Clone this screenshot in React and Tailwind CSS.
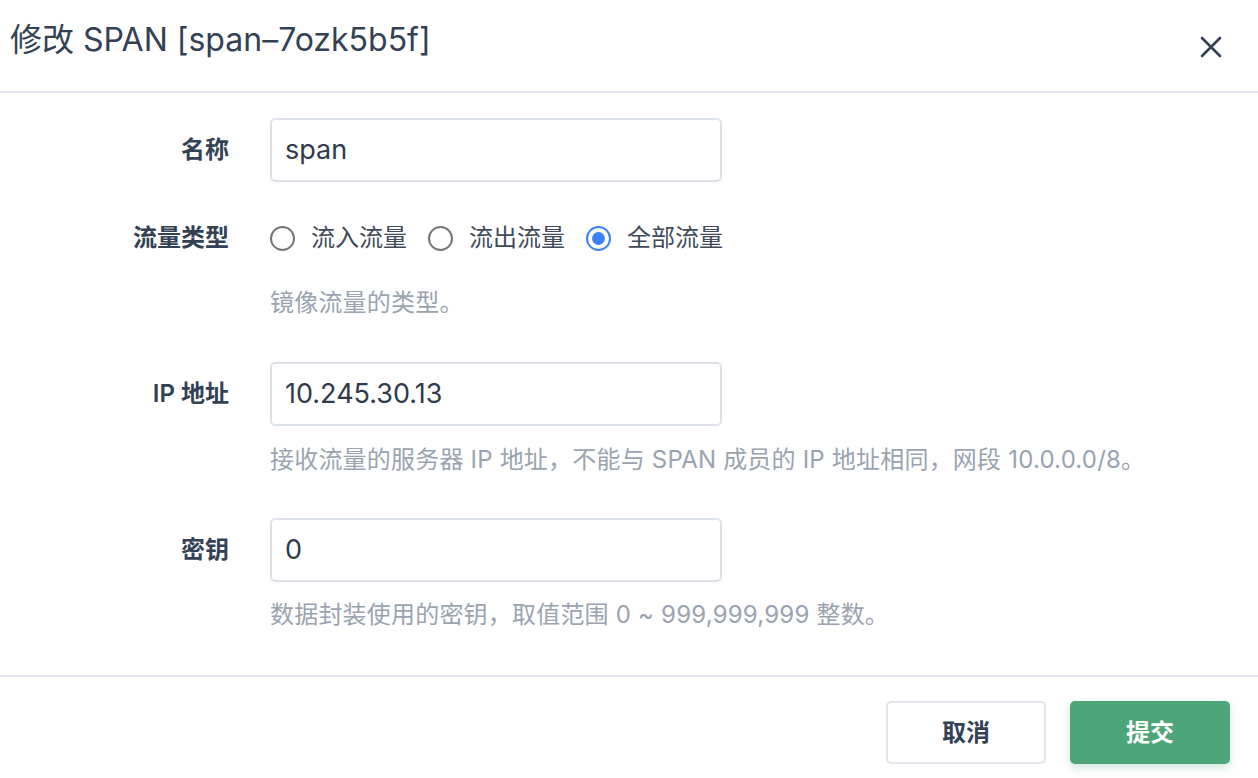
import React from "react";

const font = { fontFamily: '"Inter", "Noto Sans CJK SC", sans-serif' };

function Radio({ checked, label }) {
  return (
    <label className="flex items-center">
      <span
        className={
          checked
            ? "flex h-[25px] w-[25px] items-center justify-center rounded-full border-2 border-[#3b82f6]"
            : "h-[25px] w-[25px] rounded-full border-2 border-[#757575]"
        }
      >
        {checked && <span className="h-[13px] w-[13px] rounded-full bg-[#3b82f6]" />}
      </span>
      <span className="ml-[16px] text-[24px] text-[#3f4a5a]">{label}</span>
    </label>
  );
}

function Row({ label, children, help, helpClass }) {
  return (
    <div className="flex">
      <div className="w-[229px] shrink-0 text-right text-[24px] font-semibold text-[#334155] leading-[64px]">
        {label}
      </div>
      <div className="ml-[41px] flex flex-col">
        {children}
        {help && (
          <div className={"text-[24px] leading-[36px] tracking-[0.2px] text-[#9aa3af] " + (helpClass || "")}>{help}</div>
        )}
      </div>
    </div>
  );
}

function Input({ value }) {
  return (
    <div className="flex h-[64px] w-[452px] items-center rounded-[5px] border-2 border-[#dde1ea] px-[13px] text-[27px] text-[#2f3b4c]">
      {value}
    </div>
  );
}

export default function App() {
  return (
    <div className="h-[778px] w-[1258px] overflow-hidden bg-white" style={font}>
      <div className="flex h-[93px] items-center justify-between border-b-2 border-[#e5e8ee] pl-[10px] pr-[36px]">
        <div className="-mt-[12px] text-[32px] text-[#334155]">修改 SPAN [span–7ozk5b5f]</div>
        <svg width="22" height="22" viewBox="0 0 22 22" className="mt-[2px]">
          <path d="M2 2 L20 20 M20 2 L2 20" stroke="#334155" strokeWidth="2.6" strokeLinecap="round" />
        </svg>
      </div>
      <div className="flex h-[582px] flex-col pt-[25px]">
        <Row label="名称">
          <Input value="span" />
        </Row>
        <div className="mt-[24px]">
          <Row label="流量类型" help="镜像流量的类型。" helpClass="mt-[15px]">
            <div className="flex h-[64px] items-center gap-[21px]">
              <Radio label="流入流量" />
              <Radio label="流出流量" />
              <Radio checked label="全部流量" />
            </div>
          </Row>
        </div>
        <div className="mt-[41px]">
          <Row
            label="IP 地址"
            help="接收流量的服务器 IP 地址，不能与 SPAN 成员的 IP 地址相同，网段 10.0.0.0/8。"
            helpClass="mt-[16px]"
          >
            <Input value="10.245.30.13" />
          </Row>
        </div>
        <div className="mt-[40px]">
          <Row label="密钥" help="数据封装使用的密钥，取值范围 0 ~ 999,999,999 整数。" helpClass="mt-[15px]">
            <Input value="0" />
          </Row>
        </div>
      </div>
      <div className="flex justify-end gap-[24px] border-t-2 border-[#e5e8ee] pr-[28px] pt-[24px]">
        <button className="h-[63px] w-[160px] rounded-[5px] border-2 border-[#e1e5ec] bg-white text-[24px] font-semibold text-[#334155]">
          取消
        </button>
        <button className="h-[63px] w-[160px] rounded-[5px] bg-[#4ca678] text-[24px] font-semibold text-white shadow-[0_4px_10px_rgba(76,166,120,0.25)]">
          提交
        </button>
      </div>
    </div>
  );
}
